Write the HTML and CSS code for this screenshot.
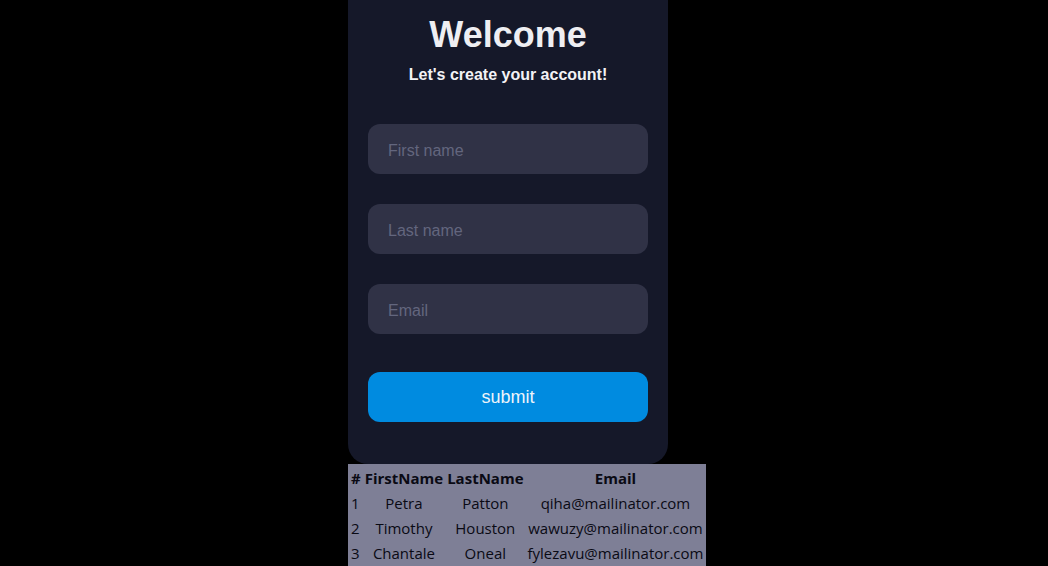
FILE: index.html
```html
<!DOCTYPE html>
<html>
<head>
<meta charset="utf-8">
<link rel="stylesheet" href="styles.css">
</head>
<body>
<div class="page">
  <form class="card">
    <h1 class="title">Welcome</h1>
    <p class="subtitle">Let's create your account!</p>
    <div class="fields">
      <input class="field" type="text" placeholder="First name">
      <input class="field" type="text" placeholder="Last name">
      <input class="field" type="text" placeholder="Email">
    </div>
    <button class="submit" type="button">submit</button>
  </form>
  <table class="users">
    <thead>
      <tr><th>#</th><th>FirstName</th><th>LastName</th><th>Email</th></tr>
    </thead>
    <tbody>
      <tr><td>1</td><td>Petra</td><td>Patton</td><td>qiha@mailinator.com</td></tr>
      <tr><td>2</td><td>Timothy</td><td>Houston</td><td>wawuzy@mailinator.com</td></tr>
      <tr><td>3</td><td>Chantale</td><td>Oneal</td><td>fylezavu@mailinator.com</td></tr>
    </tbody>
  </table>
</div>
</body>
</html>
```
FILE: styles.css
```css
html, body {
  margin: 0;
  padding: 0;
  background: #000;
}
.page {
  display: flex;
  flex-direction: column;
  align-items: flex-start;
  margin-left: 348px;
}
.card {
  box-sizing: border-box;
  width: 320px;
  background: #151829;
  border-radius: 0 0 20px 20px;
  padding: 14px 20px 42px;
  display: flex;
  flex-direction: column;
  font-family: "Liberation Sans", Arial, sans-serif;
  margin: 0;
}
.title {
  margin: 0;
  font-size: 36px;
  line-height: 41px;
  font-weight: bold;
  color: #eeeef2;
  text-align: center;
}
.subtitle {
  margin: 11px 0 0;
  font-size: 16px;
  line-height: 18px;
  font-weight: bold;
  color: #f2f2f5;
  text-align: center;
}
.fields {
  display: flex;
  flex-direction: column;
  gap: 30px;
  margin-top: 40px;
}
.field {
  box-sizing: border-box;
  height: 50px;
  width: 100%;
  border: none;
  outline: none;
  border-radius: 12px;
  background: #303246;
  padding: 3px 20px 0;
  font-family: "Liberation Sans", Arial, sans-serif;
  font-size: 16px;
  color: #e0e0e8;
}
.field::placeholder {
  color: #63667e;
}
.submit {
  margin-top: 38px;
  height: 50px;
  border: none;
  border-radius: 12px;
  background: #008be0;
  color: #eef4fa;
  font-family: "Liberation Sans", Arial, sans-serif;
  font-size: 18px;
  cursor: pointer;
}
.users {
  background: #7e7f96;
  font-family: "Open Sans", "Noto Sans", sans-serif;
  font-size: 15px;
  color: #0a0a14;
  border-spacing: 2px;
}
.users th, .users td {
  padding: 2px 1px 0;
  text-align: center;
  line-height: 21px;
}
.users th {
  font-weight: bold;
}
.users td:first-child {
  text-align: left;
}
```
